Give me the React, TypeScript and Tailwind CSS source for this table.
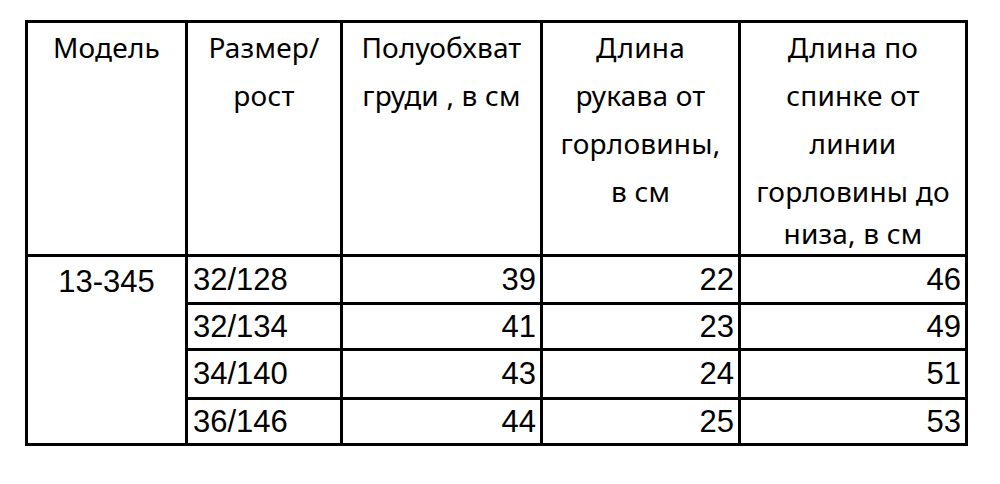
import React from "react";

const head = "font-['Noto_Sans','Open_Sans',sans-serif] text-[28px] tracking-[0.2px] text-black";
const data = "font-['Liberation_Sans',Arial,sans-serif] text-[31px] text-black";

const rows = [
  { size: "32/128", a: "39", b: "22", c: "46", h: "h-[48px]" },
  { size: "32/134", a: "41", b: "23", c: "49", h: "h-[46px]" },
  { size: "34/140", a: "43", b: "24", c: "51", h: "h-[49px]" },
  { size: "36/146", a: "44", b: "25", c: "53", h: "h-[46px]" },
];

function Lines({ lines }: { lines: string[] }) {
  return (
    <>
      {lines.map((l, i) => (
        <span
          key={i}
          className={`block whitespace-nowrap ${i === 4 ? "leading-[36px]" : "leading-[48px]"}`}
        >
          {l}
        </span>
      ))}
    </>
  );
}

const headers: string[][] = [
  ["Модель"],
  ["Размер/", "рост"],
  ["Полуобхват", "груди , в см"],
  ["Длина", "рукава от", "горловины,", "в см"],
  ["Длина по", "спинке от", "линии", "горловины до", "низа, в см"],
];

export default function App() {
  return (
    <div className="w-[1000px] h-[484px] bg-white overflow-hidden">
      <table className="ml-[25px] mt-[20px] w-[943px] table-fixed border-collapse border-[3px] border-black">
        <colgroup>
          <col className="w-[160px]" />
          <col className="w-[155px]" />
          <col className="w-[200px]" />
          <col className="w-[198px]" />
          <col className="w-[227px]" />
        </colgroup>
        <tbody>
          <tr>
            {headers.map((h, i) => (
              <td
                key={i}
                className={`${i === 0 ? "h-[234px]" : ""} border-[3px] border-black align-top text-center p-0 ${head}`}
              >
                <Lines lines={h} />
              </td>
            ))}
          </tr>
          {rows.map((r, i) => (
            <tr key={r.size}>
              {i === 0 && (
                <td rowSpan={4} className={`border-[3px] border-black align-top text-center pt-[2px] px-0 leading-[45px] ${data}`}>
                  13-345
                </td>
              )}
              <td className={`${r.h} border-[3px] border-black align-middle text-left pl-[5px] pr-0 py-0 leading-[34px] ${data}`}>{r.size}</td>
              <td className={`border-[3px] border-black align-middle text-right pr-[4px] pl-0 py-0 leading-[34px] ${data}`}>{r.a}</td>
              <td className={`border-[3px] border-black align-middle text-right pr-[4px] pl-0 py-0 leading-[34px] ${data}`}>{r.b}</td>
              <td className={`border-[3px] border-black align-middle text-right pr-[4px] pl-0 py-0 leading-[34px] ${data}`}>{r.c}</td>
            </tr>
          ))}
        </tbody>
      </table>
    </div>
  );
}
